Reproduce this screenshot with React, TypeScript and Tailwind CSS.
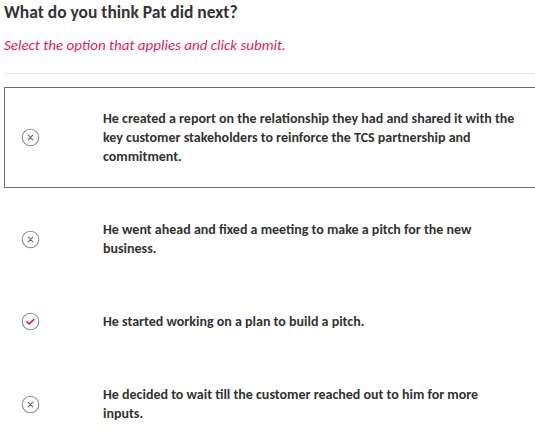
import React from "react";

type Option = {
  id: number;
  text: string;
  correct: boolean;
  selected: boolean;
};

const options: Option[] = [
  {
    id: 1,
    text: "He created a report on the relationship they had and shared it with the key customer stakeholders to reinforce the TCS partnership and commitment.",
    correct: false,
    selected: true,
  },
  {
    id: 2,
    text: "He went ahead and fixed a meeting to make a pitch for the new business.",
    correct: false,
    selected: false,
  },
  {
    id: 3,
    text: "He started working on a plan to build a pitch.",
    correct: true,
    selected: false,
  },
  {
    id: 4,
    text: "He decided to wait till the customer reached out to him for more inputs.",
    correct: false,
    selected: false,
  },
];

function StatusIcon({ correct }: { correct: boolean }) {
  return (
    <svg className="w-[19px] h-[19px]" viewBox="0 0 19 19" fill="none">
      <circle cx="9.5" cy="9.5" r="8.3" stroke="#8f8f8f" strokeWidth="1.1" />
      {correct ? (
        <path
          d="M6 9.8l2.2 2 4.6-4.2"
          stroke="#e8175d"
          strokeWidth="1.6"
          strokeLinecap="round"
          strokeLinejoin="round"
        />
      ) : (
        <path
          d="M7.2 7.2l4.6 4.6M11.8 7.2l-4.6 4.6"
          stroke="#666"
          strokeWidth="1.1"
          strokeLinecap="round"
        />
      )}
    </svg>
  );
}

export default function App() {
  return (
    <div className="bg-white min-h-screen pl-1 text-[#333] font-['Carlito','Calibri','Liberation_Sans',sans-serif]">
      <h1 className="text-[17.5px] font-bold leading-[22px] pt-px">
        What do you think Pat did next?
      </h1>
      <p className="mt-[12px] text-[15px] italic text-[#ea1a5c] leading-[20px]">
        Select the option that applies and click submit.
      </p>
      <div className="mt-[18px] border-t border-[#e6e6e6]" />
      <div className="mt-[13px] flex flex-col gap-[10px]">
        {options.map((o) => (
          <div
            key={o.id}
            className={`flex items-center border border-r-0 py-[21px] ${
              o.selected ? "border-[#6b6b6b]" : "border-transparent"
            }`}
          >
            <div className="w-[98px] shrink-0 pl-[16px]">
              <StatusIcon correct={o.correct} />
            </div>
            <p className="text-[14px] font-bold leading-[19px] pr-5">{o.text}</p>
          </div>
        ))}
      </div>
    </div>
  );
}
